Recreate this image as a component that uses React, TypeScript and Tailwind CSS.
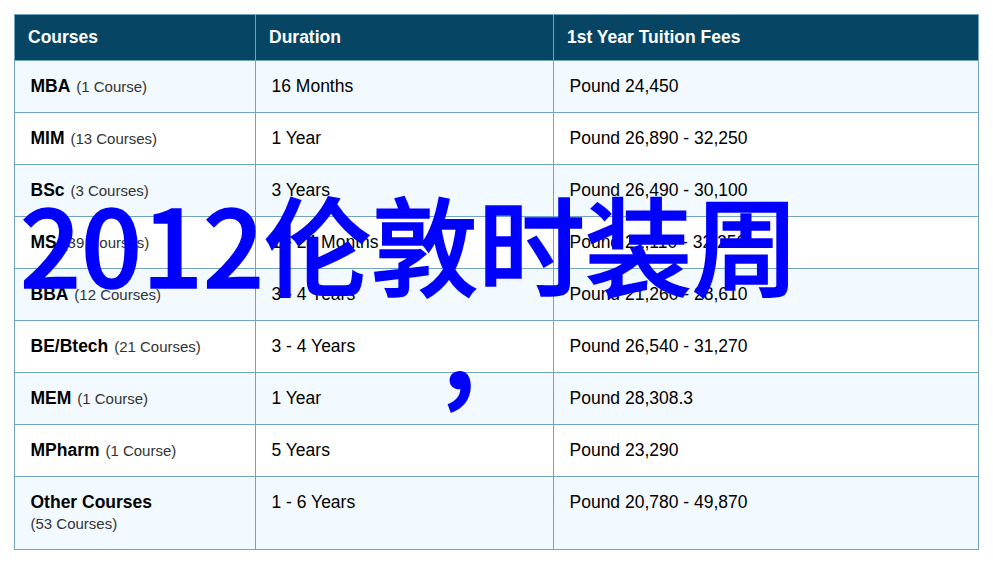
const rows = [
  { name: 'MBA', count: '(1 Course)', duration: '16 Months', fees: 'Pound 24,450' },
  { name: 'MIM', count: '(13 Courses)', duration: '1 Year', fees: 'Pound 26,890 - 32,250' },
  { name: 'BSc', count: '(3 Courses)', duration: '3 Years', fees: 'Pound 26,490 - 30,100' },
  { name: 'MS', count: '(39 Courses)', duration: '1 - 24 Months', fees: 'Pound 21,110 - 32,250' },
  { name: 'BBA', count: '(12 Courses)', duration: '3 - 4 Years', fees: 'Pound 21,260 - 28,610' },
  { name: 'BE/Btech', count: '(21 Courses)', duration: '3 - 4 Years', fees: 'Pound 26,540 - 31,270' },
  { name: 'MEM', count: '(1 Course)', duration: '1 Year', fees: 'Pound 28,308.3' },
  { name: 'MPharm', count: '(1 Course)', duration: '5 Years', fees: 'Pound 23,290' },
]

const App = () => {
  return (
    <div className="relative h-[570px] w-[993px] overflow-hidden bg-white p-[14px] font-['Liberation_Sans',Arial,sans-serif] text-black">
      <table className="w-[965px] table-fixed border-collapse border border-[#72a3bf]">
        <thead>
          <tr className="h-[46px] bg-[#064563] text-left text-[17.5px] font-bold text-white">
            <th className="w-[241px] border border-[#72a3bf] pl-[13px]">Courses</th>
            <th className="w-[298px] border border-[#72a3bf] pl-[13px]">Duration</th>
            <th className="border border-[#72a3bf] pl-[13px]">1st Year Tuition Fees</th>
          </tr>
        </thead>
        <tbody className="text-[17.5px]">
          {rows.map((row, i) => (
            <tr key={row.name} className={`h-[52px] ${i % 2 === 0 ? 'bg-[#f2f9ff]' : 'bg-white'}`}>
              <td className="border border-[#72a3bf] pl-[15.5px]">
                <b>{row.name}</b> <span className="ml-[1px] text-[15px] text-[#333]">{row.count}</span>
              </td>
              <td className="border border-[#72a3bf] pl-[15.5px]">{row.duration}</td>
              <td className="border border-[#72a3bf] pl-[15.5px]">{row.fees}</td>
            </tr>
          ))}
          <tr className="h-[73px] bg-[#f2f9ff] align-top">
            <td className="border border-[#72a3bf] pl-[15.5px] pt-[12px]">
              <b>Other Courses</b>
              <div className="-mt-[2px] text-[15px] text-[#333]">(53 Courses)</div>
            </td>
            <td className="border border-[#72a3bf] pl-[15.5px] pt-[12px]">1 - 6 Years</td>
            <td className="border border-[#72a3bf] pl-[15.5px] pt-[12px]">Pound 20,780 - 49,870</td>
          </tr>
        </tbody>
      </table>
      <div className="absolute left-[20px] top-[167px] whitespace-nowrap font-['Noto_Sans_CJK_SC',sans-serif] text-[107px] leading-[150px] font-medium text-[#0000ff] [-webkit-text-stroke:1.5px_#0000ff]">
        2012伦敦时装周
      </div>
      <div className="absolute left-[442px] top-[294px] font-['Noto_Sans_CJK_SC',sans-serif] text-[105.5px] leading-[100px] font-bold text-[#0000ff]">
        ,
      </div>
    </div>
  )
}

export default App
